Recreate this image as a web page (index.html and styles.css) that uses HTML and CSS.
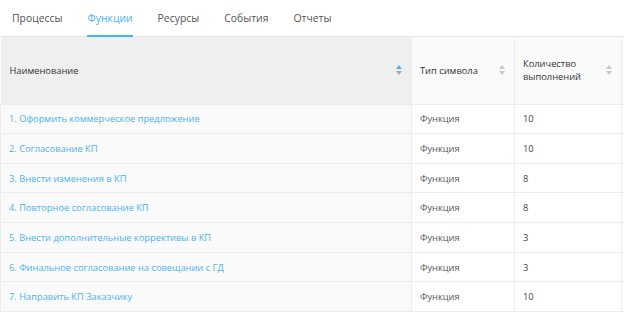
FILE: index.html
```html
<!DOCTYPE html>
<html lang="ru">
<head>
    <meta charset="UTF-8">
    <title>Функции</title>
    <link rel="stylesheet" href="styles.css">
</head>
<body>

    <!-- Tabs -->
    <nav class="tabs">
        <a href="#" class="tab">Процессы</a>
        <a href="#" class="tab active">Функции</a>
        <a href="#" class="tab">Ресурсы</a>
        <a href="#" class="tab">События</a>
        <a href="#" class="tab">Отчеты</a>
    </nav>

    <!-- Functions table -->
    <div class="table-wrap">
        <table class="grid">
            <colgroup>
                <col class="c-name">
                <col class="c-type">
                <col class="c-count">
                <col class="c-extra">
            </colgroup>
            <thead>
                <tr>
                    <th class="sorted"><div class="th-in"><span>Наименование</span><i class="sort asc"></i></div></th>
                    <th><div class="th-in"><span>Тип символа</span><i class="sort"></i></div></th>
                    <th><div class="th-in"><span>Количество<br>выполнений</span><i class="sort"></i></div></th>
                    <th></th>
                </tr>
            </thead>
            <tbody id="rows"></tbody>
        </table>
    </div>

    <script>
        const rows = [
            { name: '1. Оформить коммерческое предложение', type: 'Функция', count: 10 },
            { name: '2. Согласование КП', type: 'Функция', count: 10 },
            { name: '3. Внести изменения в КП', type: 'Функция', count: 8 },
            { name: '4. Повторное согласование КП', type: 'Функция', count: 8 },
            { name: '5. Внести дополнительные коррективы в КП', type: 'Функция', count: 3 },
            { name: '6. Финальное согласование на совещании с ГД', type: 'Функция', count: 3 },
            { name: '7. Направить КП Заказчику', type: 'Функция', count: 10 }
        ];

        const tbody = document.getElementById('rows');
        rows.forEach(r => {
            const tr = document.createElement('tr');
            tr.innerHTML = `
                <td class="sorted"><a href="#">${r.name}</a></td>
                <td class="type">${r.type}</td>
                <td>${r.count}</td>
                <td></td>
            `;
            tbody.appendChild(tr);
        });
    </script>

</body>
</html>
```

FILE: styles.css
```css
/* Reset */
* { margin: 0; padding: 0; box-sizing: border-box; }
body { font-family: 'Open Sans', 'DejaVu Sans', sans-serif; background: #fff; color: #333; overflow: hidden; }

/* Tabs */
.tabs { display: flex; gap: 25px; padding: 0 12px; height: 37px; border-bottom: 1px solid #e6e6e6; }
.tab { display: flex; align-items: center; height: 37px; font-size: 10.4px; color: #555; text-decoration: none; border-bottom: 2px solid transparent; padding-top: 1px; margin-bottom: -1px; }
.tab.active { color: #45b5f2; border-bottom-color: #45b5f2; }

/* Table */
.table-wrap { width: 624px; overflow: hidden; }
.grid { width: 760px; border-collapse: collapse; table-layout: fixed; font-size: 9.3px; }
.c-name { width: 411px; }
.c-type { width: 103px; }
.c-count { width: 107px; }
.c-extra { width: 139px; }

.grid th { height: 67px; background: #fafafa; font-weight: 400; color: #333; text-align: left; border-right: 1px solid #ececec; border-bottom: 1px solid #ececec; padding: 0 9px 0 8px; }
.grid th.sorted { background: #efefef; padding-left: 9px; }
.th-in { display: flex; align-items: center; justify-content: space-between; line-height: 13px; }

.sort { position: relative; width: 7px; height: 10px; flex: none; margin-right: -1px; }
.sort::before, .sort::after { content: ''; position: absolute; left: 0; border-left: 3.5px solid transparent; border-right: 3.5px solid transparent; }
.sort::before { top: 0; border-bottom: 4px solid #c8c8c8; }
.sort::after { bottom: 0; border-top: 4px solid #c8c8c8; }
.sort.asc::before { border-bottom-color: #45b5f2; }
.sort.asc::after { border-top-color: #a9a9a9; }

.grid td { height: 29.67px; border-right: 1px solid #ececec; border-bottom: 1px solid #ececec; padding: 0 8px; color: #444; white-space: nowrap; }
.grid td.sorted { background: #fafafa; padding-left: 8px; border-left: 1px solid #ececec; }
.grid td.type { color: #555; }
.grid td a { color: #4ab3ee; text-decoration: none; }
```
